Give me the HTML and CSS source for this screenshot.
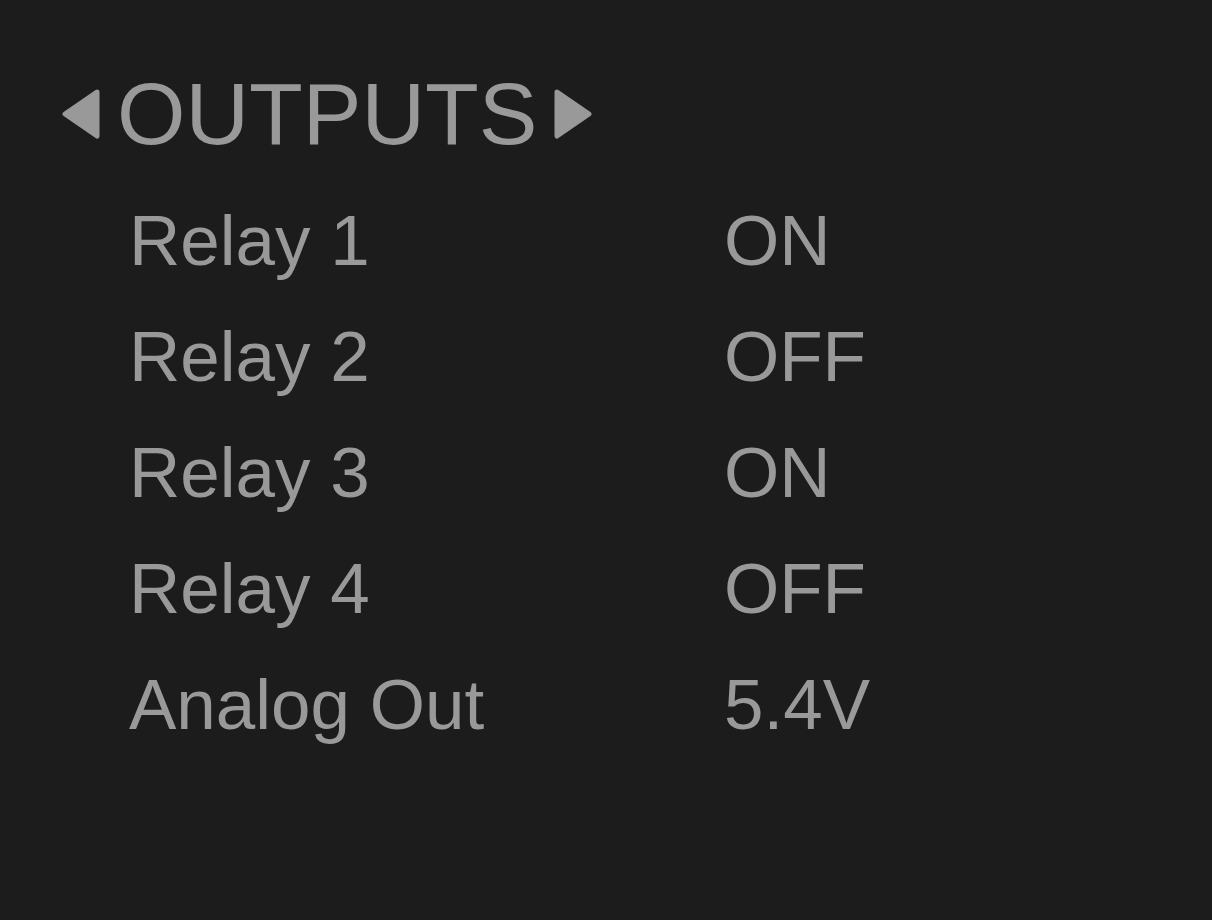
FILE: index.html
```html
<!DOCTYPE html>
<html>
<head>
    <link rel="stylesheet" href="styles.css">
</head>
<body>
    <div class="screen">
        <div class="screen-title">
            <svg class="arrow" viewBox="0 0 38 50" width="38" height="50">
                <path d="M35 3 L3 25 L35 47 Z" />
            </svg>
            <span class="title-text">OUTPUTS</span>
            <svg class="arrow" viewBox="0 0 38 50" width="38" height="50">
                <path d="M3 3 L35 25 L3 47 Z" />
            </svg>
        </div>
        <div class="rows">
            <div class="row"><span class="label">Relay 1</span><span class="value">ON</span></div>
            <div class="row"><span class="label">Relay 2</span><span class="value">OFF</span></div>
            <div class="row"><span class="label">Relay 3</span><span class="value">ON</span></div>
            <div class="row"><span class="label">Relay 4</span><span class="value">OFF</span></div>
            <div class="row"><span class="label">Analog Out</span><span class="value">5.4V</span></div>
        </div>
    </div>
</body>
</html>
```

FILE: styles.css
```css
html, body {
    margin: 0;
    height: 100%;
    background: #1c1c1c;
}

body {
    font-family: "Liberation Sans", Arial, sans-serif;
    color: #999999;
}

.screen {
    padding: 64px 0 0 62px;
}

.screen-title {
    display: flex;
    align-items: center;
    gap: 17px;
    height: 100px;
    font-size: 88px;
    line-height: 100px;
}

.arrow path {
    fill: #999999;
    stroke: #999999;
    stroke-width: 5;
    stroke-linejoin: round;
}

.rows {
    margin-top: 19px;
    padding-left: 67px;
}

.row {
    display: grid;
    grid-template-columns: 595px auto;
    font-size: 71px;
    line-height: 116px;
}
```
